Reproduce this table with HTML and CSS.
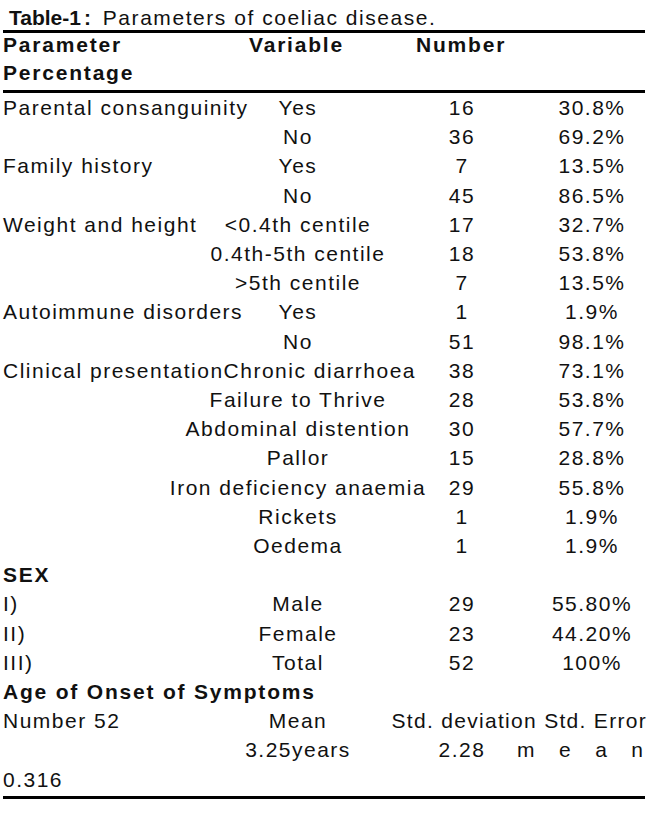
FILE: index.html
```html
<!DOCTYPE html>
<html lang="en">
<head>
<meta charset="utf-8">
<title>Table-1: Parameters of coeliac disease</title>
<link rel="stylesheet" href="styles.css">
</head>
<body>
<div class="table">
  <div class="caption"><b class="cap-label">Table-1</b><b class="cap-colon">:</b> <span class="cap-text">Parameters of coeliac disease.</span></div>
  <div class="head">
    <div class="head-row head-row-1"><span class="h-param">Parameter</span><span class="h-var">Variable</span><span class="h-num">Number</span></div>
    <div class="head-row head-row-2"><span>Percentage</span></div>
  </div>
  <div class="grid">
    <div class="c1">Parental consanguinity</div><div class="c2">Yes</div><div class="c3">16</div><div class="c4">30.8%</div>
    <div class="c1"></div><div class="c2">No</div><div class="c3">36</div><div class="c4">69.2%</div>
    <div class="c1">Family history</div><div class="c2">Yes</div><div class="c3">7</div><div class="c4">13.5%</div>
    <div class="c1"></div><div class="c2">No</div><div class="c3">45</div><div class="c4">86.5%</div>
    <div class="c1">Weight and height</div><div class="c2">&lt;0.4th centile</div><div class="c3">17</div><div class="c4">32.7%</div>
    <div class="c1"></div><div class="c2">0.4th-5th centile</div><div class="c3">18</div><div class="c4">53.8%</div>
    <div class="c1"></div><div class="c2">&gt;5th centile</div><div class="c3">7</div><div class="c4">13.5%</div>
    <div class="c1">Autoimmune disorders</div><div class="c2">Yes</div><div class="c3">1</div><div class="c4">1.9%</div>
    <div class="c1"></div><div class="c2">No</div><div class="c3">51</div><div class="c4">98.1%</div>
    <div class="c12">Clinical presentationChronic diarrhoea</div><div class="c3">38</div><div class="c4">73.1%</div>
    <div class="c1"></div><div class="c2">Failure to Thrive</div><div class="c3">28</div><div class="c4">53.8%</div>
    <div class="c1"></div><div class="c2">Abdominal distention</div><div class="c3">30</div><div class="c4">57.7%</div>
    <div class="c1"></div><div class="c2">Pallor</div><div class="c3">15</div><div class="c4">28.8%</div>
    <div class="c1"></div><div class="c2">Iron deficiency anaemia</div><div class="c3">29</div><div class="c4">55.8%</div>
    <div class="c1"></div><div class="c2">Rickets</div><div class="c3">1</div><div class="c4">1.9%</div>
    <div class="c1"></div><div class="c2">Oedema</div><div class="c3">1</div><div class="c4">1.9%</div>
    <div class="section">SEX</div>
    <div class="c1">I)</div><div class="c2">Male</div><div class="c3">29</div><div class="c4">55.80%</div>
    <div class="c1">II)</div><div class="c2">Female</div><div class="c3">23</div><div class="c4">44.20%</div>
    <div class="c1">III)</div><div class="c2">Total</div><div class="c3">52</div><div class="c4">100%</div>
    <div class="section">Age of Onset of Symptoms</div>
    <div class="c1">Number 52</div><div class="c2">Mean</div><div class="c34">Std. deviation Std. Error</div>
    <div class="c1"></div><div class="c2">3.25years</div><div class="c3">2.28</div><div class="c4 spread"><span>m</span><span>e</span><span>a</span><span>n</span></div>
    <div class="c1">0.316</div>
  </div>
</div>
</body>
</html>
```

FILE: styles.css
```css
html, body {
  margin: 0;
  padding: 0;
  background: #ffffff;
}

body {
  font-family: "Liberation Sans", Arial, sans-serif;
  font-size: 21px;
  color: #111111;
}

.table {
  width: 642px;
  margin-left: 3px;
}

.caption {
  padding-top: 6px;
  padding-left: 6px;
  line-height: 24px;
  border-bottom: 3px solid #000;
  white-space: nowrap;
}

.cap-label {
  font-weight: bold;
  letter-spacing: 0;
}

.cap-colon {
  font-weight: bold;
  margin-left: 3px;
  margin-right: 6px;
}

.cap-text {
  letter-spacing: 1.55px;
}

.head {
  padding-bottom: 3px;
  border-bottom: 3px solid #000;
  font-weight: bold;
  letter-spacing: 1.8px;
  white-space: nowrap;
}

.head-row {
  display: flex;
}

.head-row-1 {
  line-height: 24px;
}

.head-row-2 {
  line-height: 28px;
  margin-top: 2px;
}

.h-param {
  width: 246px;
}

.h-var {
  width: 167px;
}

.grid {
  display: grid;
  grid-template-columns: 165px 260px 68px 149px;
  line-height: 29.2px;
  letter-spacing: 1.5px;
  white-space: nowrap;
  padding-bottom: 2px;
  border-bottom: 3px solid #000;
}

.c1 {
  grid-column: 1;
  min-height: 29.2px;
}

.c2 {
  text-align: center;
}

.c12 {
  grid-column: 1 / span 2;
}

.c3 {
  text-align: center;
}

.c34 {
  grid-column: 2 / span 3;
  justify-self: end;
  margin-right: -2px;
  letter-spacing: 1.3px;
}

.c2 + .c34 {
  grid-column: 3 / span 2;
}

.c4 {
  text-align: center;
  padding-left: 43px;
}

.spread {
  display: flex;
  justify-content: space-between;
  padding-left: 21px;
  padding-right: 2px;
  letter-spacing: 0;
}

.section {
  grid-column: 1 / span 4;
  font-weight: bold;
  letter-spacing: 1.8px;
}
```
